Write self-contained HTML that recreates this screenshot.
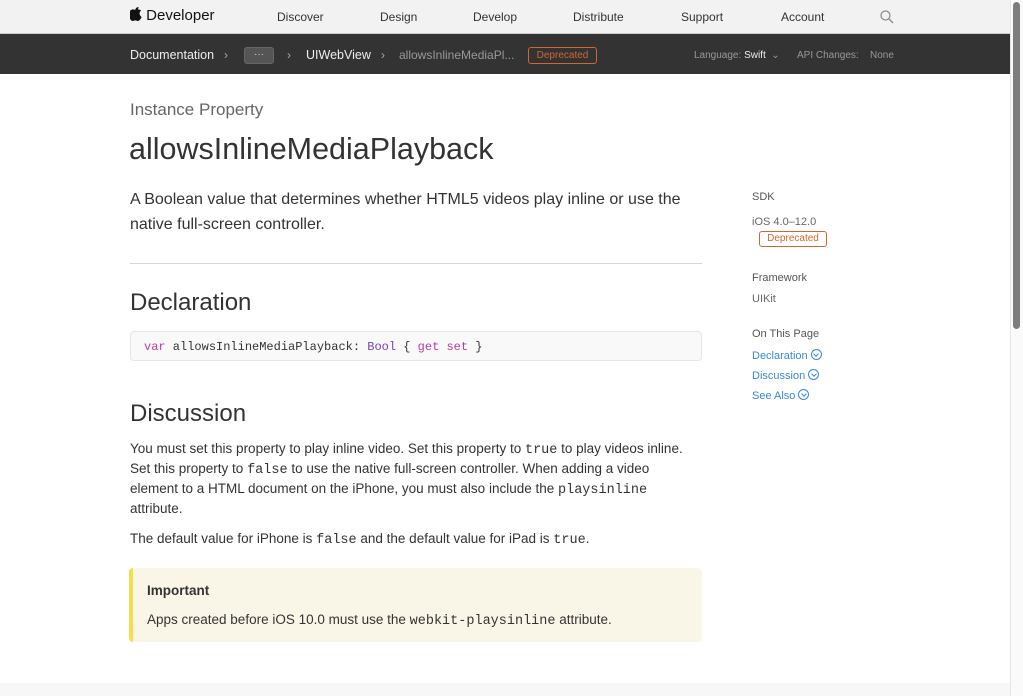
<!DOCTYPE html>
<html><head><meta charset="utf-8"><style>
*{margin:0;padding:0;box-sizing:border-box}
body{width:1023px;height:696px;overflow:hidden;font-family:"Liberation Sans",sans-serif;background:#fff;color:#333;position:relative}
.a{position:absolute;white-space:nowrap}
.nav{position:absolute;left:0;top:0;width:1010px;height:34px;background:#f2f2f2;border-bottom:1px solid #ccc}
.nav .a{top:10px;font-size:12px;color:#333}
.bar{position:absolute;left:0;top:34px;width:1010px;height:40px;background:#333}
.bar .a{font-size:12px;top:14px}
.tag{border:1px solid #d0672e;color:#d0672e;border-radius:3px;font-size:10px;text-align:center}
.bar .tag{font-size:10px}
.lnk{color:#3a87d6;font-size:11px}
.circ{display:inline-block;width:11px;height:11px;border:1px solid #3a87d6;border-radius:50%;vertical-align:-1px;margin-left:3px;position:relative}
.circ:after{content:"";position:absolute;left:2.5px;top:1.5px;width:3px;height:3px;border-right:1px solid #3a87d6;border-bottom:1px solid #3a87d6;transform:rotate(45deg)}
p.t{position:absolute;left:130px;width:560px;font-size:13.5px;line-height:20px;color:#333}
code{font-family:"Liberation Mono",monospace;font-size:13.5px;line-height:0}
</style></head><body>
<div class="nav">
<div class="a" style="left:130px;top:7px;font-size:15px;color:#111"><svg width="12" height="14" viewBox="0 0 12 14" style="vertical-align:-1px"><path d="M8.5 0c.1 1-.3 1.9-.9 2.5-.6.7-1.5 1.1-2.3 1-.1-.9.3-1.9.9-2.5C6.8.4 7.7 0 8.5 0zM11.6 10c-.4.9-.6 1.3-1.1 2-.7 1-1.6 2-2.7 2-1 0-1.2-.6-2.5-.6s-1.6.6-2.6.6C1.6 14 .8 13 .1 12c-2-3-1.6-7 .5-8.7.8-.6 1.8-.9 2.6-.9 1.1 0 1.7.6 2.6.6.8 0 1.4-.6 2.6-.6 1 0 2 .5 2.7 1.4-2.3 1.3-1.9 4.6.5 6.2z" fill="#111"/></svg> Developer</div>
<div class="a" style="left:277px">Discover</div>
<div class="a" style="left:380px">Design</div>
<div class="a" style="left:473px">Develop</div>
<div class="a" style="left:573px">Distribute</div>
<div class="a" style="left:681px">Support</div>
<div class="a" style="left:781px">Account</div>
<svg class="a" style="left:880px;top:10px" width="14" height="14" viewBox="0 0 14 14"><circle cx="5.5" cy="5.5" r="4.5" fill="none" stroke="#888" stroke-width="1.2"/><path d="M9 9l4 4" stroke="#888" stroke-width="1.3"/></svg>
</div>
<div class="bar">
<div class="a" style="left:130px;color:#eee;font-size:12.5px;top:14px">Documentation</div>
<div class="a" style="left:224px;color:#aaa">›</div>
<div class="a" style="left:244px;top:13px;width:30px;height:17px;background:#555;border:1px solid #666;border-radius:3px;color:#ccc;font-size:10px;text-align:center;line-height:13px">···</div>
<div class="a" style="left:287px;color:#aaa">›</div>
<div class="a" style="left:306px;color:#eee;font-size:12.5px">UIWebView</div>
<div class="a" style="left:381px;color:#aaa">›</div>
<div class="a" style="left:399px;color:#999">allowsInlineMediaPl...</div>
<div class="a tag" style="left:528px;top:13px;width:69px;height:17px;line-height:15px">Deprecated</div>
<div class="a" style="left:694px;font-size:10px;color:#999;top:16px">Language: <b style="color:#eee;font-weight:normal">Swift</b> &nbsp;⌄</div>
<div class="a" style="left:797px;font-size:10px;color:#999;top:16px">API Changes:</div>
<div class="a" style="left:870px;font-size:10px;color:#999;top:16px">None</div>
</div>
<div class="a" style="left:1010px;top:0;width:13px;height:696px;background:#fafafa;border-left:1px solid #e5e5e5"></div>
<div class="a" style="left:1013px;top:2px;width:7px;height:327px;background:#7d7d7d;border-radius:4px"></div>

<div class="a" style="left:130px;top:100px;font-size:17px;color:#666">Instance Property</div>
<div class="a" style="left:129px;top:132px;font-size:30.5px;color:#333">allowsInlineMediaPlayback</div>
<div class="a" style="left:130px;top:187px;font-size:16px;line-height:25px;color:#333;white-space:normal;width:572px">A Boolean value that determines whether HTML5 videos play inline or use the native full-screen controller.</div>
<div class="a" style="left:130px;top:263px;width:572px;height:1px;background:#d6d6d6"></div>
<div class="a" style="left:130px;top:289px;font-size:24px;color:#333">Declaration</div>
<div class="a" style="left:130px;top:331px;width:572px;height:30px;background:#f9f9f9;border:1px solid #e6e6e6;border-radius:4px;padding:8px 0 0 13px;font-family:'Liberation Mono',monospace;font-size:12px;color:#333"><span style="color:#b83ca8">var</span> allowsInlineMediaPlayback: <span style="color:#7a3fbf">Bool</span> { <span style="color:#b83ca8">get set</span> }</div>
<div class="a" style="left:130px;top:400px;font-size:24px;color:#333">Discussion</div>
<p class="t" style="top:439px">You must set this property to play inline video. Set this property to <code>true</code> to play videos inline. Set this property to <code>false</code> to use the native full-screen controller. When adding a video element to a HTML document on the iPhone, you must also include the <code>playsinline</code> attribute.</p>
<p class="t" style="top:529px">The default value for iPhone is <code>false</code> and the default value for iPad is <code>true</code>.</p>
<div class="a" style="left:129px;top:568px;width:573px;height:74px;background:#f9f6e8;border-left:4px solid #f7dd4b;border-radius:4px"></div>
<div class="a" style="left:147px;top:583px;font-size:13.5px;font-weight:bold;color:#333">Important</div>
<div class="a" style="left:147px;top:612px;font-size:13.5px;color:#333">Apps created before iOS 10.0 must use the <code>webkit-playsinline</code> attribute.</div>
<div class="a" style="left:0;top:683px;width:1010px;height:13px;background:#f7f7f7"></div>

<div class="a" style="left:752px;top:191px;font-size:11px;color:#555">SDK</div>
<div class="a" style="left:752px;top:216px;font-size:11px;color:#666">iOS 4.0–12.0</div>
<div class="a tag" style="left:759px;top:231px;width:68px;height:16px;line-height:14px">Deprecated</div>
<div class="a" style="left:752px;top:272px;font-size:11px;color:#555">Framework</div>
<div class="a" style="left:752px;top:293px;font-size:11px;color:#666">UIKit</div>
<div class="a" style="left:752px;top:328px;font-size:11px;color:#555">On This Page</div>
<div class="a lnk" style="left:752px;top:349px">Declaration<span class="circ"></span></div>
<div class="a lnk" style="left:752px;top:369px">Discussion<span class="circ"></span></div>
<div class="a lnk" style="left:752px;top:389px">See Also<span class="circ"></span></div>
</body></html>
